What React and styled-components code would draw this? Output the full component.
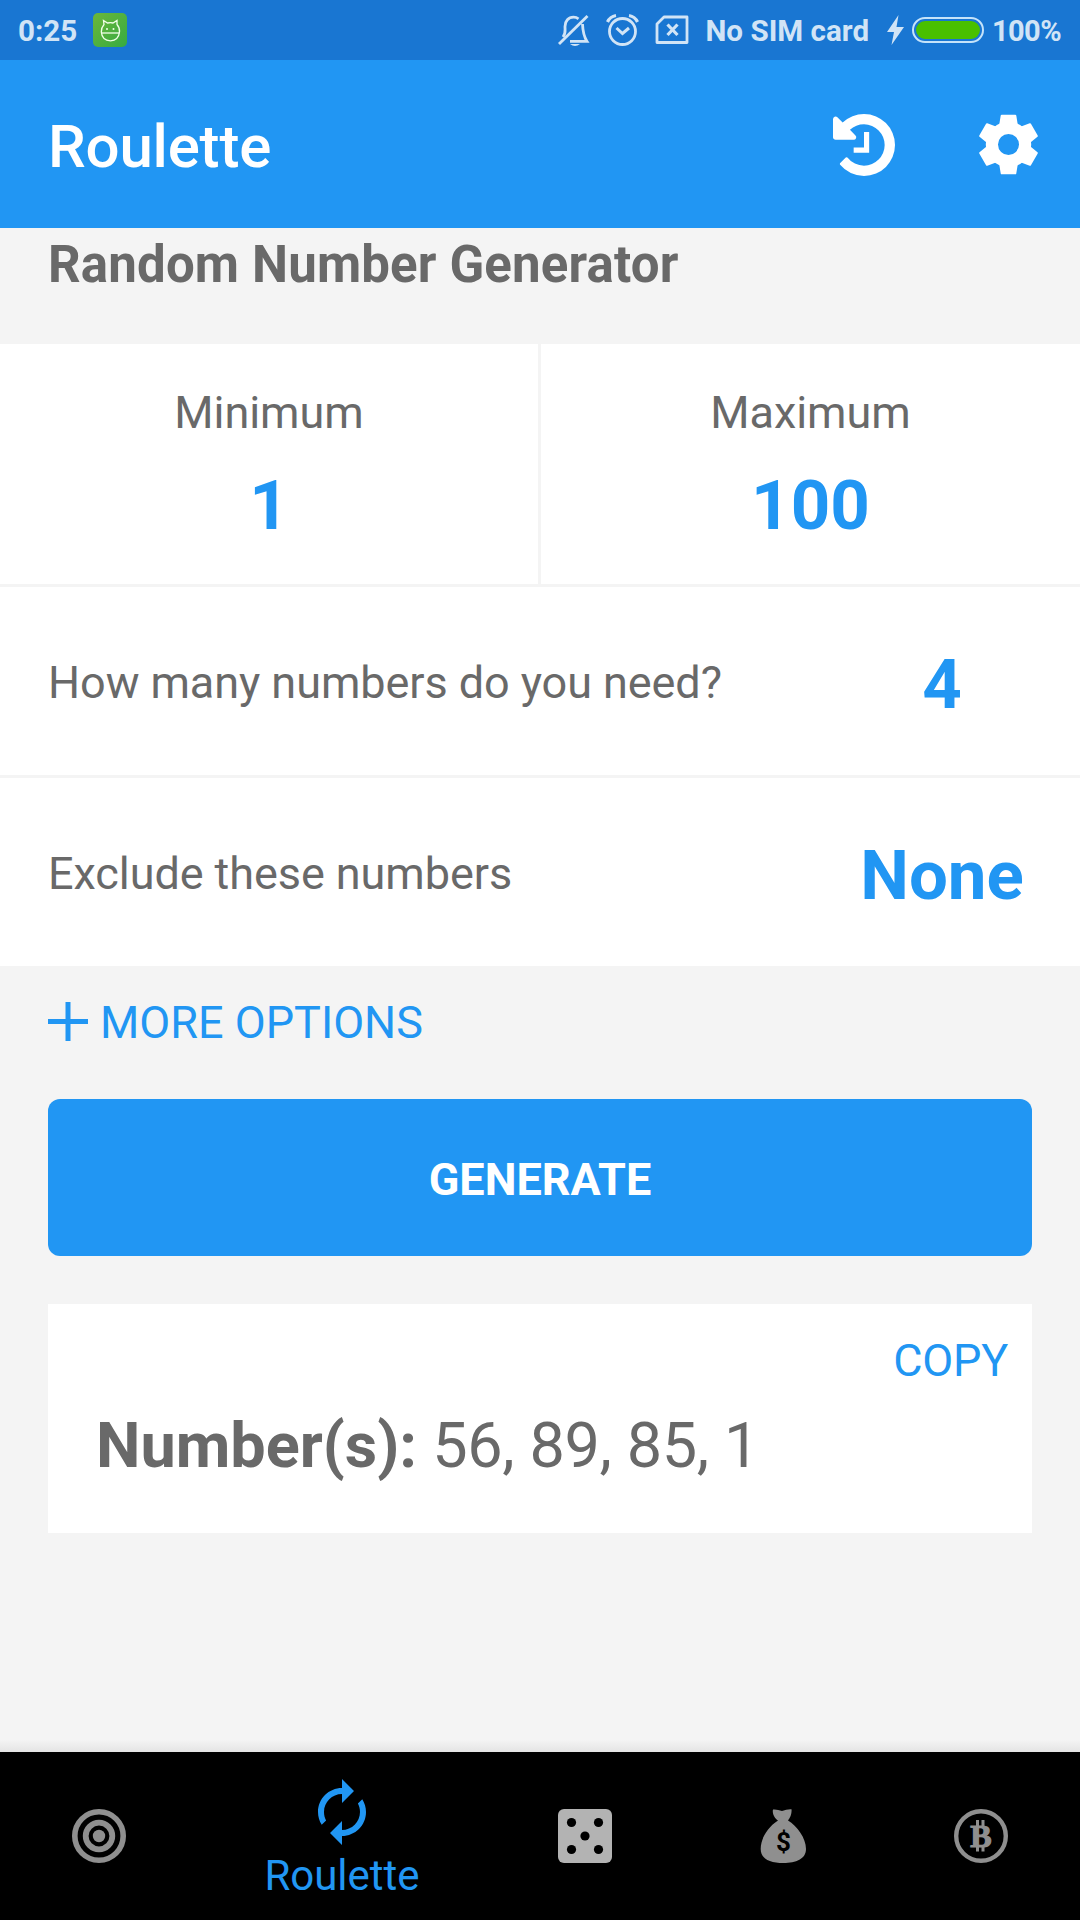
import styled, { createGlobalStyle } from "styled-components"

const GlobalStyle = createGlobalStyle`
    * {
        box-sizing: border-box;
    }
    body {
        margin: 0;
        background-color: #f4f4f4;
        font-family: Roboto, sans-serif;
        color: #696969;
    }
    svg {
        display: block;
        flex-shrink: 0;
    }
`
const Container = styled.div`
    width: 1080px;
    height: 1920px;
    display: flex;
    flex-direction: column;
    overflow: hidden;
`
const StatusBar = styled.div`
    height: 60px;
    padding: 0 19px 0 18px;
    display: flex;
    align-items: center;
    justify-content: space-between;
    background-color: #1976d2;
    color: #d1e4f6;
`
const StatusGroup = styled.div`
    display: flex;
    align-items: center;
`
const StatusText = styled.span`
    padding-top: 1px;
    font-size: ${props => props.$size || 29.6}px;
    font-weight: 700;
    line-height: 60px;
    white-space: nowrap;
    margin-left: ${props => props.$gap || 0}px;
    letter-spacing: ${props => props.$spacing || 0}px;
`
const AppIcon = styled.div`
    width: 34px;
    height: 34px;
    margin-left: 16px;
    border-radius: 5px;
    background: linear-gradient(135deg, #6cb63a, #35ab42);
`
const StatusIcon = styled.div`
    margin-left: ${props => props.$gap || 0}px;
`
const Battery = styled.div`
    width: 72px;
    height: 26px;
    margin-left: 8px;
    padding: 2px;
    border: 2px solid #c5e3fa;
    border-radius: 13px;
`
const BatteryLevel = styled.div`
    height: 100%;
    border-radius: 9px;
    background-color: #49c000;
`
const AppBar = styled.header`
    height: 168px;
    padding: 0 41px 0 48px;
    display: flex;
    align-items: center;
    background-color: #2196f3;
    color: white;
`
const AppTitle = styled.h1`
    flex: 1;
    margin: 5px 0 0;
    font-size: 60px;
    font-weight: 500;
    line-height: 70px;
    letter-spacing: -0.2px;
`
const Actions = styled.div`
    display: flex;
    align-items: center;
    gap: 83px;
    padding-top: 1px;
`
const Main = styled.main`
    flex: 1;
`
const Heading = styled.h2`
    height: 116px;
    margin: 0;
    padding: 7px 48px 0;
    font-size: 51px;
    font-weight: 700;
    line-height: 60px;
    letter-spacing: 0.16px;
`
const Range = styled.div`
    height: 243px;
    display: flex;
    background-color: white;
    border-bottom: 3px solid #f4f4f4;
`
const RangeCell = styled.div`
    width: ${props => props.$width}px;
    padding-top: 39px;
    text-align: center;

    & + & {
        border-left: 3px solid #f4f4f4;
    }
`
const Label = styled.div`
    font-size: 45px;
    line-height: 60px;
    letter-spacing: -0.07px;
`
const Value = styled.div`
    font-size: 69px;
    font-weight: 700;
    line-height: 80px;
    text-align: center;
    color: #2196f3;
    margin-top: ${props => props.$top || 0}px;
`
const OptionRow = styled.div`
    height: 188px;
    display: grid;
    grid-template-columns: 1fr 276px;
    align-items: center;
    padding: 4px 0 0 48px;
    background-color: white;

    & + & {
        height: 191px;
        border-top: 3px solid #f4f4f4;
    }
`
const MoreOptions = styled.div`
    height: 133px;
    padding: 27px 48px 0;
    display: flex;
    align-items: flex-start;
    gap: 12px;
    font-size: 45px;
    line-height: 60px;
    color: #2196f3;
`
const PlusIcon = styled.svg`
    margin-top: 9px;
`
const GenerateButton = styled.button`
    display: block;
    width: 984px;
    height: 157px;
    margin: 0 48px 48px;
    padding: 3px 0 0;
    border: none;
    border-radius: 12px;
    background-color: #2196f3;
    color: white;
    font-family: inherit;
    font-size: 45px;
    font-weight: 700;
`
const ResultCard = styled.div`
    height: 229px;
    margin: 0 48px;
    padding: 27px 24px 0 48px;
    background-color: white;
`
const CopyButton = styled.div`
    font-size: 45px;
    line-height: 60px;
    text-align: right;
    letter-spacing: -0.2px;
    color: #2196f3;
`
const Result = styled.div`
    margin-top: 15px;
    font-size: 63px;
    line-height: 80px;
`
const Numbers = styled.span`
    letter-spacing: -0.4px;
`
const BottomShadow = styled.div`
    height: 12px;
    background: linear-gradient(#f4f4f4, #e4e4e4);
`
const BottomNav = styled.nav`
    height: 168px;
    display: flex;
    background-color: black;
`
const NavItem = styled.div`
    width: ${props => props.$active ? 288 : 198}px;
    padding-top: ${props => props.$active ? 24 : 57}px;
    display: flex;
    flex-direction: column;
    align-items: center;
    color: ${props => props.$active ? '#2196f3' : '#8f8f8f'};
`
const NavLabel = styled.span`
    font-size: 42px;
    line-height: 50px;
    margin-top: 3px;
`

const BellOff = () => (
    <svg width="32" height="34" viewBox="0 0 32 34" fill="none" stroke="#d1e4f6" strokeWidth="2.8">
        <path d="M1 31 L29.500 3" />
        <path d="M5 24 C8 20 7 18 7 13.500 C7 8 10.500 4.200 15.500 4.200 C17.600 4.200 19.200 4.800 20.500 5.800" />
        <path d="M24.500 11 C24.800 18 25.500 23 29 28.400 L12 28.400" />
        <path d="M12 31 Q17 35 22 31 Z" fill="#d1e4f6" stroke="none" />
    </svg>
)

const Alarm = () => (
    <svg width="33" height="34" viewBox="0 0 33 34" fill="none" stroke="#d1e4f6" strokeWidth="2.8">
        <circle cx="16.500" cy="18.500" r="13" />
        <path d="M1.500 9 Q4 3.500 10 2.500" strokeWidth="3.200" />
        <path d="M31.500 9 Q29 3.500 23 2.500" strokeWidth="3.200" />
        <path d="M10.500 15 L16.500 20.500 L23 15" strokeWidth="3" />
    </svg>
)

const NoSim = () => (
    <svg width="34" height="30" viewBox="0 0 34 30" fill="none" stroke="#d1e4f6" strokeWidth="2.8" strokeLinejoin="round">
        <path d="M9 2 H32 V27.500 H2 V9 Z" />
        <path d="M12.500 9.500 L22.500 20 M22.500 9.500 L12.500 20" strokeWidth="3.200" />
    </svg>
)

const Creature = () => (
    <svg width="34" height="34" viewBox="0 0 34 34" fill="none" stroke="#f1ffe8" strokeWidth="1.300">
        <path d="M11 11.500 L10.500 7.500 L14.500 10 Q17.500 9.300 20 10 L24 7.500 L24 11.500 Q26.800 14.500 26.500 19 Q25.500 27.500 17.500 27.800 Q9 27.500 8.300 19 Q8.300 14.500 11 11.500 Z" />
        <path d="M8.500 20 H26.500" />
        <circle cx="14" cy="16" r="1" fill="#f1ffe8" stroke="none" />
        <circle cx="20.500" cy="16" r="1" fill="#f1ffe8" stroke="none" />
    </svg>
)

const HistoryIcon = () => (
    <svg width="62" height="62" viewBox="0 128 1536 1536" fill="currentColor">
        <path d="M1536 896q0 156-61 298t-164 245-245 164-298 61q-172 0-327-72.500t-264-204.500q-7-10-6.500-22.500t8.500-20.500l137-138q10-9 25-9 16 2 23 12 73 95 179 147t225 52q104 0 198.500-40.500t163.500-109.500 109.500-163.500 40.500-198.500-40.500-198.500-109.500-163.500-163.500-109.500-198.500-40.500q-98 0-188 35.500t-160 101.500l137 138q31 30 14 69-17 40-59 40h-448q-26 0-45-19t-19-45v-448q0-42 40-59 39-17 69 14l130 129q107-101 244.500-156.500t284.500-55.500q156 0 298 61t245 164 164 245 61 298z" />
        <path d="M768 576h128v512h-384v-128h256z" />
    </svg>
)

const GearIcon = () => (
    <svg width="61" height="61" viewBox="-90 -90 180 180" fill="currentColor">
        <circle r="49" fill="none" stroke="currentColor" strokeWidth="36" />
        {[0, 60, 120, 180, 240, 300].map(a => (
            <path
                key={a}
                transform={`rotate(${a})`}
                d="M-20 -85 H20 L25 -54 L20 -48 H-20 L-25 -54 Z"
                stroke="currentColor"
                strokeWidth="6"
                strokeLinejoin="round"
            />
        ))}
    </svg>
)

const TargetIcon = () => (
    <svg width="54" height="54" viewBox="0 0 54 54" fill="none" stroke="currentColor">
        <circle cx="27" cy="27" r="24.200" strokeWidth="5.600" />
        <circle cx="27" cy="27" r="13.300" strokeWidth="5.800" />
        <circle cx="27" cy="27" r="6.200" fill="currentColor" stroke="none" />
    </svg>
)

const SpinIcon = () => (
    <svg width="72" height="72" viewBox="0 0 24 24" fill="currentColor">
        <path d="M12 6v3l4-4-4-4v3c-4.420 0-8 3.580-8 8 0 1.570.46 3.030 1.240 4.260L6.700 14.800c-.45-.83-.7-1.790-.7-2.800 0-3.310 2.690-6 6-6zm6.760 1.740L17.300 9.200c.44.84.7 1.790.7 2.800 0 3.310-2.690 6-6 6v-3l-4 4 4 4v-3c4.420 0 8-3.580 8-8 0-1.570-.46-3.030-1.240-4.260z" />
    </svg>
)

const DiceIcon = () => (
    <svg width="54" height="54" viewBox="0 0 54 54">
        <rect width="54" height="54" rx="6" fill="#b3b3b3" />
        {[[13.5, 13.5], [40.5, 13.5], [27, 27], [13.5, 40.5], [40.5, 40.5]].map(([x, y]) => (
            <circle key={`${x}-${y}`} cx={x} cy={y} r="4.600" />
        ))}
    </svg>
)

const MoneyBagIcon = () => (
    <svg width="54" height="54" viewBox="0 0 54 54" fill="currentColor">
        <path d="M17 0.500 Q21 0 26 2 Q31 0 35.500 0.300 C36 4 34.500 8.500 32 11.500 C41 17 50 29 50 40 C50 50 40 54 27.500 54 C14 54 4.700 50 4.700 40 C4.700 29 12 18 22 11.500 C18.500 9.500 16 4 17 0.500 Z" />
        <text x="27.500" y="42" textAnchor="middle" fontFamily="Roboto, sans-serif" fontSize="26" fontWeight="700" fill="black">$</text>
    </svg>
)

const BitcoinIcon = () => (
    <svg width="54" height="54" viewBox="0 0 54 54" fill="currentColor">
        <circle cx="27" cy="27" r="24.800" fill="none" stroke="currentColor" strokeWidth="4.400" />
        <path d="M22 11h3v7h-3z M27.500 11h3v7h-3z M22 36h3v6.500h-3z M27.500 36h3v6.500h-3z" />
        <text x="27" y="37.500" textAnchor="middle" fontFamily="Liberation Serif, serif" fontSize="32" fontWeight="700" stroke="currentColor" strokeWidth="1.200">B</text>
    </svg>
)

const ranges = [
    { label: 'Minimum', value: 1, width: 538 },
    { label: 'Maximum', value: 100, width: 542 },
]

const options = [
    { label: 'How many numbers do you need?', value: 4 },
    { label: 'Exclude these numbers', value: 'None' },
]

const navItems = [
    { name: 'target', icon: <TargetIcon /> },
    { name: 'roulette', icon: <SpinIcon />, label: 'Roulette' },
    { name: 'dice', icon: <DiceIcon /> },
    { name: 'money', icon: <MoneyBagIcon /> },
    { name: 'bitcoin', icon: <BitcoinIcon /> },
]

const App = () => {
    return (
        <Container>
            <GlobalStyle />
            <StatusBar>
                <StatusGroup>
                    <StatusText>0:25</StatusText>
                    <AppIcon><Creature /></AppIcon>
                </StatusGroup>
                <StatusGroup>
                    <StatusIcon><BellOff /></StatusIcon>
                    <StatusIcon $gap={16}><Alarm /></StatusIcon>
                    <StatusIcon $gap={16}><NoSim /></StatusIcon>
                    <StatusText $gap={16}>No SIM card</StatusText>
                    <StatusIcon $gap={18}>
                        <svg width="17" height="30" viewBox="0 0 17 30" fill="#d1e4f6">
                            <path d="M11.500 0 L0 17 H7 L4.500 30 L17 12 H9.500 Z" />
                        </svg>
                    </StatusIcon>
                    <Battery><BatteryLevel /></Battery>
                    <StatusText $gap={8} $size={29} $spacing={-0.6}>100%</StatusText>
                </StatusGroup>
            </StatusBar>
            <AppBar>
                <AppTitle>Roulette</AppTitle>
                <Actions>
                    <HistoryIcon />
                    <GearIcon />
                </Actions>
            </AppBar>
            <Main>
                <Heading>Random Number Generator</Heading>
                <Range>
                    {ranges.map(r => (
                        <RangeCell key={r.label} $width={r.width}>
                            <Label>{r.label}</Label>
                            <Value $top={23}>{r.value}</Value>
                        </RangeCell>
                    ))}
                </Range>
                {options.map(o => (
                    <OptionRow key={o.label}>
                        <Label>{o.label}</Label>
                        <Value $top={4}>{o.value}</Value>
                    </OptionRow>
                ))}
                <MoreOptions>
                    <PlusIcon width="40" height="39" viewBox="0 0 40 39" fill="currentColor">
                        <path d="M0 17h40v5H0z M17.500 0h5v39h-5z" />
                    </PlusIcon>
                    MORE OPTIONS
                </MoreOptions>
                <GenerateButton>GENERATE</GenerateButton>
                <ResultCard>
                    <CopyButton>COPY</CopyButton>
                    <Result><b>Number(s):</b><Numbers> 56, 89, 85, 1</Numbers></Result>
                </ResultCard>
            </Main>
            <BottomShadow />
            <BottomNav>
                {navItems.map(item => (
                    <NavItem key={item.name} $active={!!item.label}>
                        {item.icon}
                        {item.label && <NavLabel>{item.label}</NavLabel>}
                    </NavItem>
                ))}
            </BottomNav>
        </Container>
    )
}

export default App
